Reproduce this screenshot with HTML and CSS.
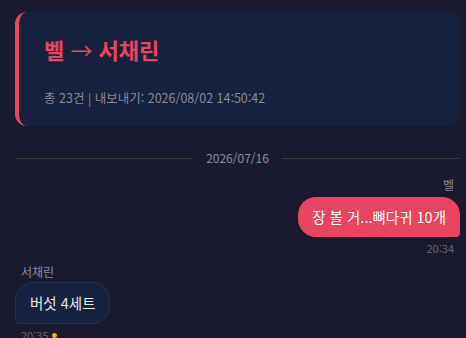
FILE: index.html
```html
<!DOCTYPE html>
<html lang="ko">
<head>
<meta charset="utf-8">
<link rel="stylesheet" href="styles.css">
</head>
<body>
<div class="page">
  <header class="card">
    <h1 class="title">벨 <span class="arrow">→</span> 서채린</h1>
    <p class="meta">총 23건 | 내보내기: 2026/08/02 14:50:42</p>
  </header>
  <div class="divider"><span>2026/07/16</span></div>
  <div class="msg mine">
    <div class="name">벨</div>
    <div class="bubble">장 볼 거...뼈다귀 10개</div>
    <div class="time">20:34</div>
  </div>
  <div class="msg theirs">
    <div class="name">서채린</div>
    <div class="bubble">버섯 4세트</div>
    <div class="time">20:35 <span class="dot"></span></div>
  </div>
</div>
</body>
</html>
```
FILE: styles.css
```css
* { box-sizing: border-box; }
html, body { margin: 0; padding: 0; }
body {
  background: #1a1a2e;
  font-family: "Noto Sans CJK KR", "Noto Sans", sans-serif;
  color: #e0e0e0;
  overflow: hidden;
}
.page {
  padding: 12px 6px 0 15px;
}
.card {
  background: #16213e;
  border-left: 4px solid #e94560;
  border-radius: 12px;
  padding: 21px 24px 18px 25px;
  height: 114px;
}
.title {
  margin: 0;
  font-size: 22px;
  font-weight: 700;
  color: #e94560;
  line-height: 32px;
}
.arrow {
  font-weight: 400;
}
.meta {
  margin: 24px 0 0;
  font-size: 12.5px;
  color: #8a8a9a;
  line-height: 18px;
}
.divider {
  display: flex;
  align-items: center;
  gap: 13px;
  margin: 24px 0 11px;
  font-size: 12px;
  line-height: 16px;
  color: #8a8a9a;
}
.divider::before, .divider::after {
  content: "";
  flex: 1;
  height: 1px;
  background: #3a3a3a;
}
.msg {
  display: flex;
  flex-direction: column;
  margin-bottom: 9px;
}
.mine { align-items: flex-end; }
.theirs { align-items: flex-start; }
.name {
  font-size: 12px;
  color: #8a8a9a;
  padding: 0 6px;
  line-height: 16px;
  margin-bottom: 4px;
}
.theirs .name {
  margin-bottom: 2px;
}
.bubble {
  font-size: 14.5px;
  line-height: 20px;
  padding: 10px 14px;
  border-radius: 18px;
}
.mine .bubble {
  background: #e94560;
  color: #fff;
  border-bottom-right-radius: 4px;
}
.theirs .bubble {
  background: #16213e;
  border: 1px solid #2a3050;
  color: #e8e8e8;
  border-bottom-left-radius: 4px;
  padding: 10px 14px;
}
.time {
  font-size: 11px;
  color: #666;
  padding: 0 6px;
  margin-top: 4px;
  line-height: 14px;
  display: flex;
  align-items: center;
  gap: 3px;
}
.dot {
  width: 5px;
  height: 5px;
  border-radius: 50%;
  background: #f5a623;
}
```
